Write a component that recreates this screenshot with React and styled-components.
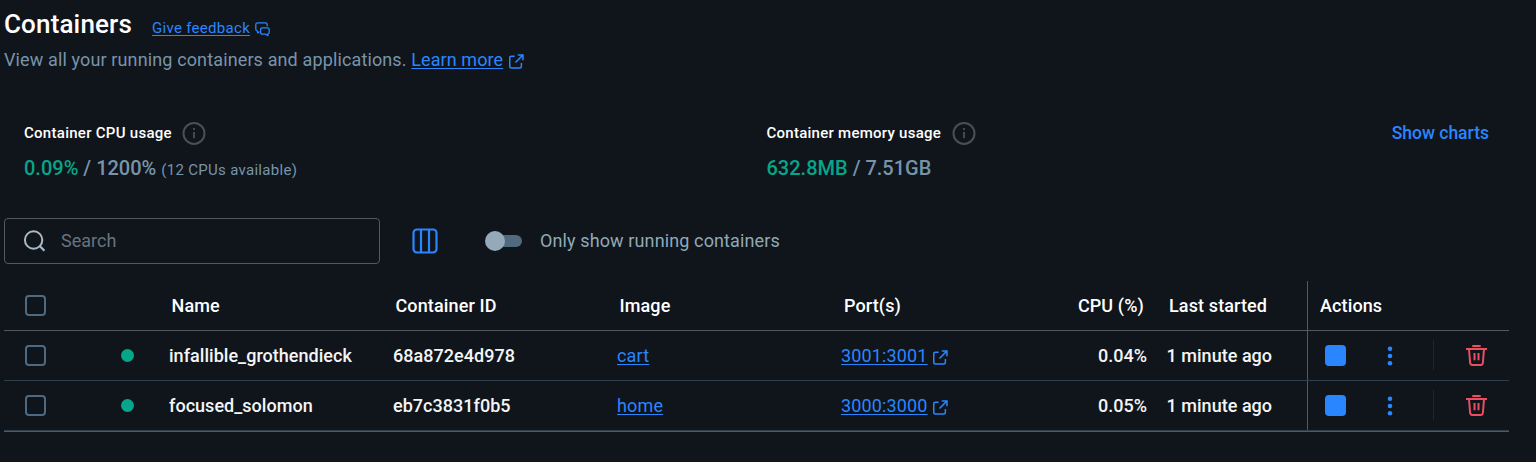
import React from 'react';
import styled, { createGlobalStyle } from 'styled-components';

const c = {
  bg: '#10151b',
  blue: '#2a86ff',
  green: '#07a58a',
  muted: '#7794ab',
  muted2: '#8fa9b8',
  grey: '#55585b',
  slate: '#2f3e49',
  box: '#4e6a81',
  red: '#e84f60',
};

const Global = createGlobalStyle`
  body { margin: 0; background: ${c.bg}; }
  * { box-sizing: border-box; }
`;

const Page = styled.main`
  width: 1536px;
  height: 462px;
  padding: 8px 27px 0 4px;
  background: ${c.bg};
  color: #fff;
  font-family: Roboto, 'Liberation Sans', sans-serif;
  font-size: 18px;
  white-space: nowrap;
  overflow: hidden;
`;

const TitleRow = styled.header`
  display: flex;
  height: 32px;
  line-height: 32px;
`;

const Title = styled.h1`
  margin: 0;
  width: 148px;
  font-size: 26px;
  font-weight: 500;
  letter-spacing: 0.15px;
`;

const Link = styled.a`
  color: ${c.blue};
  text-decoration: underline;
  text-decoration-thickness: 1px;
  text-underline-offset: 2px;
  font-size: ${(p) => p.$size || 18}px;
  letter-spacing: ${(p) => p.$spacing || 0}px;
`;

const Feedback = styled.div`
  display: flex;
  padding-top: 4px;
  svg { margin: 10px 0 0 5px; }
`;

const Intro = styled.p`
  display: flex;
  margin: 0;
  height: 40px;
  line-height: 40px;
  color: ${c.muted};
  letter-spacing: 0.13px;
  svg { margin: 14px 0 0 6px; }
`;

const Usage = styled.section`
  display: grid;
  grid-template-columns: 742.5px 1fr auto;
  height: 64px;
  margin-top: 41px;
  padding: 0 20px;
`;

const UsageHead = styled.div`
  display: flex;
  align-items: center;
  gap: 10.5px;
  height: 24px;
  font-size: 15px;
  font-weight: 500;
  letter-spacing: ${(p) => p.$spacing}px;
`;

const UsageValue = styled.div`
  height: 24px;
  margin-top: 11px;
  line-height: 24px;
  font-size: 20px;
  font-weight: 500;
  color: ${c.muted};
`;

const Used = styled.span`
  color: ${c.green};
`;

const Note = styled.span`
  font-size: 15px;
  font-weight: 400;
  letter-spacing: 0.3px;
`;

const ShowCharts = styled.button`
  height: 24px;
  padding: 0;
  border: 0;
  background: none;
  color: ${c.blue};
  font: 500 17.5px/24px Roboto, sans-serif;
`;

const Toolbar = styled.section`
  display: flex;
  align-items: center;
  height: 46px;
  margin-top: 33px;
`;

const SearchBox = styled.label`
  display: flex;
  align-items: center;
  gap: 15px;
  width: 376px;
  height: 46px;
  margin-right: 32px;
  padding: 0 18px;
  border: 1px solid ${c.grey};
  border-radius: 4px;
  color: #67747d;
`;

const Placeholder = styled.span`
  padding-bottom: 2px;
`;

const Toggle = styled.div`
  display: flex;
  align-items: center;
  width: 37px;
  height: 20px;
  margin: 0 18px 0 47px;
`;

const Thumb = styled.i`
  z-index: 1;
  flex: none;
  width: 20px;
  height: 20px;
  border-radius: 50%;
  background: #94aaba;
`;

const Track = styled.i`
  flex: none;
  width: 21px;
  height: 12px;
  margin-left: -4px;
  border-radius: 0 6px 6px 0;
  background: #506b80;
`;

const ToggleLabel = styled.span`
  padding-bottom: 2px;
  color: ${c.muted2};
  letter-spacing: 0.12px;
`;

const Table = styled.section`
  width: 1505px;
  margin-top: 17px;
  border-bottom: 1px solid ${c.grey};
`;

const Row = styled.div`
  display: grid;
  grid-template-columns: 90px 62px repeat(3, 224px) 224px 102px 153px 202px;
  height: 50px;
  border-bottom: 1px solid ${(p) => (p.$head ? c.grey : c.slate)};
  color: ${(p) => (p.$head ? '#fff' : '#f4f5f6')};
  font-weight: 500;
  letter-spacing: ${(p) => (p.$head ? 0.12 : 0.03)}px;
`;

const Cell = styled.div`
  display: flex;
  align-items: center;
  justify-content: ${(p) => (p.$right ? 'flex-end' : 'flex-start')};
  padding: 0 ${(p) => (p.$right ? p.$pad : 0)}px 0 ${(p) => (p.$right ? 0 : p.$pad)}px;
  font-weight: ${(p) => (p.$regular ? 400 : 'inherit')};
`;

const ActionCell = styled(Cell)`
  border-left: 1px solid ${c.grey};
`;

const Checkbox = styled.i`
  width: 21px;
  height: 21px;
  border: 2px solid ${c.box};
  border-radius: 4px;
`;

const Status = styled.i`
  width: 13px;
  height: 13px;
  border-radius: 50%;
  background: ${c.green};
`;

const Stop = styled.i`
  width: 21px;
  height: 21px;
  border-radius: 4px;
  background: ${c.blue};
`;

const Dots = styled.svg`
  margin-left: 41px;
`;

const Divider = styled.i`
  width: 1px;
  height: 30px;
  margin: 0 32px 2px 40px;
  background: #20272e;
`;

const ExternalIcon = () => (
  <svg width="15" height="15" viewBox="0 0 16 16" fill="none" stroke={c.blue} strokeWidth="1.600">
    <path d="M6 2.400H2.700C1.400 2.400.8 3 .8 4.200v8.900c0 1.300.6 1.900 1.900 1.900h8.600c1.300 0 1.900-.6 1.900-1.900V9.500M9.400 1h5.500v5.600M14.700 1.200 6.900 9" />
  </svg>
);

const FeedbackIcon = () => (
  <svg width="15" height="15" viewBox="0 0 15 15" fill="none" stroke={c.blue} strokeWidth="1.3" strokeLinejoin="round">
    <path d="M4.500 9.800 2.600 11V9.200C1.300 8.900.8 8.200.8 7.200V2.600C.8 1.400 1.400.8 2.600.8h7.800c1.200 0 1.800.6 1.800 1.800v1.600" />
    <path d="M7.400 5.800h5c1.200 0 1.800.6 1.800 1.800v2.700c0 1-.4 1.500-1.300 1.700v1.700l-2.200-1.500H7.400c-1.200 0-1.800-.6-1.800-1.800V7.600c0-1.200.6-1.800 1.800-1.800z" />
  </svg>
);

const InfoIcon = () => (
  <svg width="24" height="24" viewBox="0 0 24 24" fill="none" stroke="#4b4f53" strokeWidth="2">
    <circle cx="12" cy="12.400" r="10.500" />
    <path d="M12 10.900v6.300M12 7v2" strokeWidth="1.800" />
  </svg>
);

const SearchIcon = () => (
  <svg width="23" height="23" viewBox="0 0 23 23" fill="none" stroke="#a7bac7" strokeWidth="2">
    <circle cx="10.600" cy="10" r="8.700" />
    <path d="m16.700 16 4.700 4.700" strokeWidth="2.300" />
  </svg>
);

const ColumnsIcon = () => (
  <svg width="26" height="26" viewBox="0 0 26 26" fill="none" stroke={c.blue} strokeWidth="2.200">
    <rect x="1.500" y="1.500" width="23" height="23" rx="3.500" />
    <path d="M9 2v22M17 2v22" />
  </svg>
);

const TrashIcon = () => (
  <svg width="21" height="21" viewBox="0 0 21 21" fill="none" stroke={c.red} strokeWidth="2">
    <path d="M0 4h21M6.300 1h8.400" />
    <path d="m3 4 1.100 13.700c.1 1.400.8 2.200 2.200 2.200h8.400c1.400 0 2.100-.8 2.200-2.200L18 4" />
    <path d="M8.500 8v7.200M12.500 8v7.200" />
  </svg>
);

const rows = [
  { name: 'infallible_grothendieck', id: '68a872e4d978', image: 'cart', port: '3001:3001', cpu: '0.04%' },
  { name: 'focused_solomon', id: 'eb7c3831f0b5', image: 'home', port: '3000:3000', cpu: '0.05%' },
];

const PortLink = styled.span`
  display: flex;
  align-items: center;
  gap: 5px;
  svg { margin-top: 4px; }
`;

export default function App() {
  return (
    <Page>
      <Global />
      <TitleRow>
        <Title>Containers</Title>
        <Feedback>
          <Link $size={15} $spacing={0.3}>Give feedback</Link>
          <FeedbackIcon />
        </Feedback>
      </TitleRow>
      <Intro>
        <span>View all your running containers and applications.&nbsp;</span>
        <Link $spacing={0.08}>Learn more</Link>
        <ExternalIcon />
      </Intro>
      <Usage>
        <div>
          <UsageHead $spacing={0.28}>Container CPU usage <InfoIcon /></UsageHead>
          <UsageValue><Used>0.09%</Used> / 1200% <Note>(12 CPUs available)</Note></UsageValue>
        </div>
        <div>
          <UsageHead $spacing={0.26}>Container memory usage <InfoIcon /></UsageHead>
          <UsageValue><Used>632.8MB</Used> / 7.51GB</UsageValue>
        </div>
        <ShowCharts>Show charts</ShowCharts>
      </Usage>
      <Toolbar>
        <SearchBox><SearchIcon /><Placeholder>Search</Placeholder></SearchBox>
        <ColumnsIcon />
        <Toggle><Thumb /><Track /></Toggle>
        <ToggleLabel>Only show running containers</ToggleLabel>
      </Toolbar>
      <Table>
        <Row $head>
          <Cell $pad={21}><Checkbox /></Cell>
          <Cell $pad={0} />
          <Cell $pad={15.5}>Name</Cell>
          <Cell $pad={15.5}>Container ID</Cell>
          <Cell $pad={15.5}>Image</Cell>
          <Cell $pad={16}>Port(s)</Cell>
          <Cell $right $pad={10}>CPU (%)</Cell>
          <Cell $pad={15}>Last started</Cell>
          <ActionCell $pad={12}>Actions</ActionCell>
        </Row>
        {rows.map((r) => (
          <Row key={r.id}>
            <Cell $pad={21}><Checkbox /></Cell>
            <Cell $pad={27}><Status /></Cell>
            <Cell $pad={13}>{r.name}</Cell>
            <Cell $pad={13}>{r.id}</Cell>
            <Cell $pad={13} $regular><Link $spacing={0.15}>{r.image}</Link></Cell>
            <Cell $pad={13} $regular><PortLink><Link $spacing={0.15}>{r.port}</Link><ExternalIcon /></PortLink></Cell>
            <Cell $right $pad={7}>{r.cpu}</Cell>
            <Cell $pad={12.5}>1 minute ago</Cell>
            <ActionCell $pad={17}>
              <Stop />
              <Dots width="6" height="20" viewBox="0 0 6 20" fill={c.blue}>
                <circle cx="3" cy="2.700" r="2.300" />
                <circle cx="3" cy="10" r="2.300" />
                <circle cx="3" cy="17.300" r="2.300" />
              </Dots>
              <Divider />
              <TrashIcon />
            </ActionCell>
          </Row>
        ))}
      </Table>
    </Page>
  );
}
